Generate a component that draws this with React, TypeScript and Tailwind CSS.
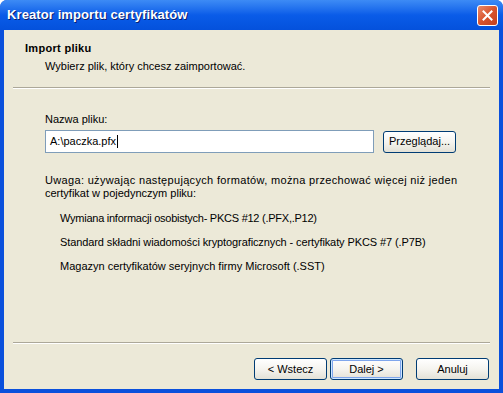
import React from 'react';

const font = { fontFamily: '"Liberation Sans", Arial, sans-serif' };

const XpButton = ({ label, primary = false }: { label: string; primary?: boolean }) => (
  <button
    className={`h-[22px] w-[73px] rounded-[3px] border border-[#003c74] bg-gradient-to-b from-white via-[#f5f4ef] to-[#e3e1d6] text-[11px] text-black ${
      primary ? 'shadow-[inset_0_0_0_1px_#cee7ff,inset_0_0_0_2px_#7fa6ec]' : ''
    }`}
  >
    {label}
  </button>
);

const CloseIcon = () => (
  <div className="flex h-[21px] w-[21px] items-center justify-center rounded-[3px] border border-white bg-gradient-to-br from-[#e88a6a] via-[#d9532c] to-[#c2401f]">
    <svg width="11" height="11" viewBox="0 0 11 11">
      <path d="M1.5 1.5 L9.5 9.5 M9.5 1.5 L1.5 9.5" stroke="white" strokeWidth="2" strokeLinecap="square" />
    </svg>
  </div>
);

export default function App() {
  return (
    <div className="flex h-[393px] w-[503px] flex-col overflow-hidden rounded-t-[7px] bg-[#0a50dc]" style={font}>
      {/* title bar */}
      <div className="flex h-[30px] items-center justify-between bg-gradient-to-b from-[#3d8bf5] via-[#0a5ce8] to-[#0451dc] pl-[7px] pr-[5px]">
        <span className="text-[13px] font-bold tracking-[0.1px] text-white [text-shadow:1px_1px_0_#0a1e6e]">
          Kreator importu certyfikatów
        </span>
        <CloseIcon />
      </div>

      {/* client area */}
      <div className="mx-[4px] mb-[4px] flex flex-1 flex-col bg-[#ece9d8] text-[11px] leading-[13px] text-black">
        <div className="h-[57px] pl-[21px] pt-[12px]">
          <div className="font-bold tracking-[0.3px]">Import pliku</div>
          <div className="mt-[5px] pl-[20px]">Wybierz plik, który chcesz zaimportować.</div>
        </div>
        <div className="mx-[9px] border-t border-b border-t-[#aca899] border-b-white" />

        <div className="flex flex-1 flex-col pl-[41px] pr-[10px]">
          <div className="mt-[24px]">Nazwa pliku:</div>
          <div className="mt-[4px] flex items-center gap-[9px]">
            <div className="flex h-[23px] w-[329px] items-center border border-[#7f9db9] bg-white pl-[4px]">
              A:\paczka.pfx<span className="ml-[1px] inline-block h-[13px] w-[1px] bg-black" />
            </div>
            <XpButton label="Przeglądaj..." />
          </div>

          <div className="mt-[21px]">
            <div className="tracking-[0.33px]">
              Uwaga: używając następujących formatów, można przechować więcej niż jeden
            </div>
            <div>certyfikat w pojedynczym pliku:</div>
          </div>
          <div className="mt-[12px] flex flex-col gap-[11px] pl-[15px]">
            <div className="tracking-[-0.25px]">Wymiana informacji osobistych- PKCS #12 (.PFX,.P12)</div>
            <div className="tracking-[-0.1px]">
              Standard składni wiadomości kryptograficznych - certyfikaty PKCS #7 (.P7B)
            </div>
            <div>Magazyn certyfikatów seryjnych firmy Microsoft (.SST)</div>
          </div>
        </div>

        <div className="mx-[9px] border-t border-b border-t-[#aca899] border-b-white" />
        <div className="flex h-[45px] items-start justify-end pr-[10px] pt-[14px]">
          <XpButton label="< Wstecz" />
          <div className="ml-[3px]">
            <XpButton label="Dalej >" primary />
          </div>
          <div className="ml-[13px]">
            <XpButton label="Anuluj" />
          </div>
        </div>
      </div>
    </div>
  );
}
